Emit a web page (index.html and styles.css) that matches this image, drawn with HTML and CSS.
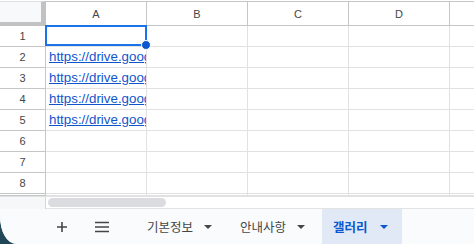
FILE: index.html
```html
<!DOCTYPE html>
<html lang="ko">
<head>
<meta charset="utf-8">
<link rel="stylesheet" href="styles.css">
</head>
<body>
<div class="app">
  <div class="sheet">
    <div class="grid">
      <div class="corner"></div>
      <div class="colh">A</div><div class="colh">B</div><div class="colh">C</div><div class="colh">D</div><div class="colh last"></div>

      <div class="rowh">1</div><div class="cell"></div><div class="cell"></div><div class="cell"></div><div class="cell"></div><div class="cell last"></div>
      <div class="rowh">2</div><div class="cell"><a class="link">https://drive.google.com/file/d/1</a></div><div class="cell"></div><div class="cell"></div><div class="cell"></div><div class="cell last"></div>
      <div class="rowh">3</div><div class="cell"><a class="link">https://drive.google.com/file/d/2</a></div><div class="cell"></div><div class="cell"></div><div class="cell"></div><div class="cell last"></div>
      <div class="rowh">4</div><div class="cell"><a class="link">https://drive.google.com/file/d/3</a></div><div class="cell"></div><div class="cell"></div><div class="cell"></div><div class="cell last"></div>
      <div class="rowh">5</div><div class="cell"><a class="link">https://drive.google.com/file/d/4</a></div><div class="cell"></div><div class="cell"></div><div class="cell"></div><div class="cell last"></div>
      <div class="rowh">6</div><div class="cell"></div><div class="cell"></div><div class="cell"></div><div class="cell"></div><div class="cell last"></div>
      <div class="rowh">7</div><div class="cell"></div><div class="cell"></div><div class="cell"></div><div class="cell"></div><div class="cell last"></div>
      <div class="rowh">8</div><div class="cell"></div><div class="cell"></div><div class="cell"></div><div class="cell"></div><div class="cell last"></div>
      <div class="rowh sliver"></div><div class="cell sliver"></div><div class="cell sliver"></div><div class="cell sliver"></div><div class="cell sliver"></div><div class="cell sliver last"></div>
    </div>
    <div class="selection"><span class="handle"></span></div>
    <div class="scrollbar">
      <div class="scroll-left"></div>
      <div class="scroll-track"><div class="thumb"></div></div>
    </div>
  </div>
  <div class="tabbar">
    <div class="tool plus">
      <svg width="12" height="12" viewBox="0 0 12 12"><path d="M6 1v10M1 6h10" stroke="#444746" stroke-width="1.6" fill="none"/></svg>
    </div>
    <div class="tool menu">
      <svg width="14" height="12" viewBox="0 0 14 12"><path d="M0 1.5h14M0 6h14M0 10.5h14" stroke="#444746" stroke-width="1.5" fill="none"/></svg>
    </div>
    <div class="tab tab1"><span class="tab-name">기본정보</span><span class="arrow"></span></div>
    <div class="tab tab2"><span class="tab-name">안내사항</span><span class="arrow"></span></div>
    <div class="tab active"><span class="tab-name">갤러리</span><span class="arrow"></span></div>
  </div>
</div>
</body>
</html>
```

FILE: styles.css
```css
html, body {
  margin: 0;
  padding: 0;
}
body {
  width: 474px;
  height: 244px;
  overflow: hidden;
  background: linear-gradient(180deg, #7d93a0 0%, #3b6272 60%, #1e4655 100%);
  font-family: "Liberation Sans", Arial, sans-serif;
}
.app {
  width: 474px;
  height: 244px;
  background: #ffffff;
  border-bottom-left-radius: 16px 28px;
  overflow: hidden;
  display: flex;
  flex-direction: column;
}
.sheet {
  position: relative;
  padding-top: 1px;
  box-sizing: border-box;
  border-bottom: 1px solid #e3e3e3;
  flex: none;
  height: 209px;
}
.grid {
  display: grid;
  grid-template-columns: 46px 101px 101px 101px 101px 24px;
  grid-template-rows: 25px repeat(8, 21px) 2px;
}
.grid > div {
  box-sizing: border-box;
}
.corner {
  background: #f8f9fa;
  border-right: 5px solid #c2c2c2;
  border-bottom: 4px solid #c2c2c2;
  border-top: 1px solid #e0e0e0;
}
.colh {
  border-top: 1px solid #c4c7c5;
  border-right: 1px solid #c4c7c5;
  border-bottom: 1px solid #c4c7c5;
  font-size: 11px;
  color: #444746;
  display: flex;
  align-items: center;
  justify-content: center;
  padding-top: 1px;
}
.rowh {
  border-right: 1px solid #c4c7c5;
  border-bottom: 1px solid #c4c7c5;
  font-size: 11px;
  color: #444746;
  display: flex;
  align-items: center;
  justify-content: center;
}
.cell {
  border-right: 1px solid #e1e1e1;
  border-bottom: 1px solid #e1e1e1;
  overflow: hidden;
  white-space: nowrap;
  display: flex;
  align-items: flex-end;
  padding: 0 0 2px 3px;
}
.last {
  border-right: none;
}
.sliver {
  padding: 0;
}
.link {
  font-size: 13.33px;
  line-height: 16px;
  color: #1155cc;
  text-decoration: underline;
}
.selection {
  position: absolute;
  left: 45px;
  top: 25px;
  width: 102px;
  height: 21px;
  box-sizing: border-box;
  border: 2px solid #1a73e8;
}
.handle {
  position: absolute;
  right: -6px;
  bottom: -6px;
  width: 8px;
  height: 8px;
  border-radius: 50%;
  background: #0b57d0;
  border: 1px solid #ffffff;
}
.scrollbar {
  display: flex;
  height: 13px;
  border-top: 1px solid #e1e1e1;
  box-sizing: border-box;
}
.scroll-left {
  width: 45px;
  background: #f6f7f8;
  border-right: 1px solid #d6d6d6;
}
.scroll-track {
  flex: 1;
  padding: 1px 0 0 2px;
}
.thumb {
  width: 118px;
  height: 9px;
  border-radius: 5px;
  background: #dadce0;
}
.tabbar {
  flex: 1;
  background: #f9fbfd;
  display: flex;
  align-items: stretch;
  font-family: "Noto Sans CJK KR", "Noto Sans", sans-serif;
}
.tool {
  display: flex;
  align-items: center;
  justify-content: center;
}
.plus {
  margin-left: 56px;
  width: 12px;
}
.menu {
  margin-left: 27px;
  width: 14px;
}
.tab {
  display: flex;
  align-items: center;
  gap: 11px;
  padding: 0 12px;
  font-size: 12.5px;
  color: #444746;
}
.tab1 {
  margin-left: 26px;
}
.tab2 {
  margin-left: 4px;
}
.arrow {
  width: 0;
  height: 0;
  border-left: 4px solid transparent;
  border-right: 4px solid transparent;
  border-top: 4px solid #444746;
}
.active {
  margin-left: 5px;
  background: #e1e9f7;
  color: #0b57d0;
  font-weight: 700;
  padding: 0 14px 0 11px;
  gap: 12px;
}
.active .arrow {
  border-top-color: #0b57d0;
}
```
